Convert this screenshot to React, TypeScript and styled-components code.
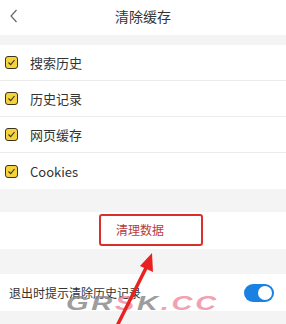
import React from "react";
import styled, { createGlobalStyle } from "styled-components";

const Global = createGlobalStyle`
  html, body { margin: 0; padding: 0; background: #f4f4f4; }
  body { font-family: "Noto Sans CJK SC", "Noto Sans", sans-serif; width: 286px; height: 324px; overflow: hidden; }
`;

const Page = styled.div`
  position: relative;
  width: 286px;
  height: 324px;
  overflow: hidden;
  background: #f4f4f4;
  display: flex;
  flex-direction: column;
`;

const Header = styled.div`
  height: 35px;
  background: #fff;
  display: flex;
  align-items: center;
  justify-content: center;
  position: relative;
  flex-shrink: 0;
`;

const Back = styled.svg`
  position: absolute;
  left: 9px;
  top: 9px;
`;

const Title = styled.div`
  font-size: 14px;
  color: #333;
  margin-top: -3px;
`;

const Gap = styled.div<{ h: number }>`
  height: ${(p) => p.h}px;
  flex-shrink: 0;
`;

const List = styled.div`
  background: #fff;
  display: flex;
  flex-direction: column;
`;

const Row = styled.div<{ last?: boolean }>`
  height: 36px;
  display: flex;
  align-items: center;
  padding-left: 5px;
  gap: 12px;
  box-sizing: border-box;
  border-bottom: ${(p) => (p.last ? "none" : "1px solid #ececec")};
`;

const Box = styled.div`
  width: 11px;
  height: 11px;
  border: 1.3px solid #3a3320;
  border-radius: 3px;
  background: #f6d33a;
  display: flex;
  align-items: center;
  justify-content: center;
`;

const Label = styled.span`
  font-size: 13px;
  color: #333;
`;

const ButtonRow = styled.div`
  background: #fff;
  height: 37px;
  display: flex;
  align-items: center;
  justify-content: center;
  flex-shrink: 0;
`;

const RedBox = styled.div`
  width: 100px;
  height: 28px;
  border: 2px solid #d9302c;
  border-radius: 3px;
  display: flex;
  align-items: center;
  justify-content: center;
  margin-left: 16px;
  margin-top: -2px;
  box-sizing: content-box;
`;

const ButtonText = styled.span`
  font-size: 12px;
  color: #b8393c;
  margin-right: 22px;
`;

const SwitchRow = styled.div`
  background: #fff;
  height: 37px;
  display: flex;
  align-items: center;
  justify-content: space-between;
  padding: 0 12px 0 9px;
  flex-shrink: 0;
`;

const SwitchLabel = styled.span`
  font-size: 12px;
  color: #333;
`;

const Toggle = styled.div`
  width: 30px;
  height: 18px;
  border-radius: 9px;
  background: #1a80e2;
  display: flex;
  align-items: center;
  justify-content: flex-end;
  padding: 0 2px;
  box-sizing: border-box;
`;

const Knob = styled.div`
  width: 14px;
  height: 14px;
  border-radius: 50%;
  background: #fff;
`;

const Watermark = styled.div`
  position: absolute;
  left: 66px;
  top: 291px;
  font-family: "Liberation Sans", Arial, sans-serif;
  font-weight: 700;
  font-style: italic;
  font-size: 21px;
  line-height: 24px;
  letter-spacing: 2px;
  transform: scaleX(1.38);
  transform-origin: left top;
  opacity: 0.8;
  pointer-events: none;
  white-space: nowrap;
`;

const W = styled.span<{ pink?: boolean }>`
  color: ${(p) => (p.pink ? "#f08aa0" : "#858585")};
`;

const Arrow = styled.svg`
  position: absolute;
  left: 0;
  top: 0;
  pointer-events: none;
`;

const Check = () => (
  <svg width="9" height="9" viewBox="0 0 9 9">
    <path d="M1.5 4.5 L3.7 6.7 L7.5 2" fill="none" stroke="#3a3320" strokeWidth="1.1" />
  </svg>
);

const items = ["搜索历史", "历史记录", "网页缓存", "Cookies"];

export default function App() {
  return (
    <>
      <Global />
      <Page>
        <Header>
          <Back width="10" height="14" viewBox="0 0 10 14">
            <path d="M7.5 1 L2 7 L7.5 13" fill="none" stroke="#666" strokeWidth="1.2" />
          </Back>
          <Title>清除缓存</Title>
        </Header>
        <Gap h={10} />
        <List>
          {items.map((t, i) => (
            <Row key={t} last={i === items.length - 1}>
              <Box>
                <Check />
              </Box>
              <Label>{t}</Label>
            </Row>
          ))}
        </List>
        <Gap h={23} />
        <ButtonRow>
          <RedBox>
            <ButtonText>清理数据</ButtonText>
          </RedBox>
        </ButtonRow>
        <Gap h={25} />
        <SwitchRow>
          <SwitchLabel>退出时提示清除历史记录</SwitchLabel>
          <Toggle>
            <Knob />
          </Toggle>
        </SwitchRow>
        <Watermark>
          <W>GR</W>
          <W pink>S</W>
          <W>K</W>
          <W pink>.CC</W>
        </Watermark>
        <Arrow width="286" height="324" viewBox="0 0 286 324">
          <path d="M117 326 L147 266" stroke="#e8231f" strokeWidth="3.5" fill="none" />
          <path d="M152 253 L153 272 L140 266 Z" fill="#e8231f" />
        </Arrow>
      </Page>
    </>
  );
}
